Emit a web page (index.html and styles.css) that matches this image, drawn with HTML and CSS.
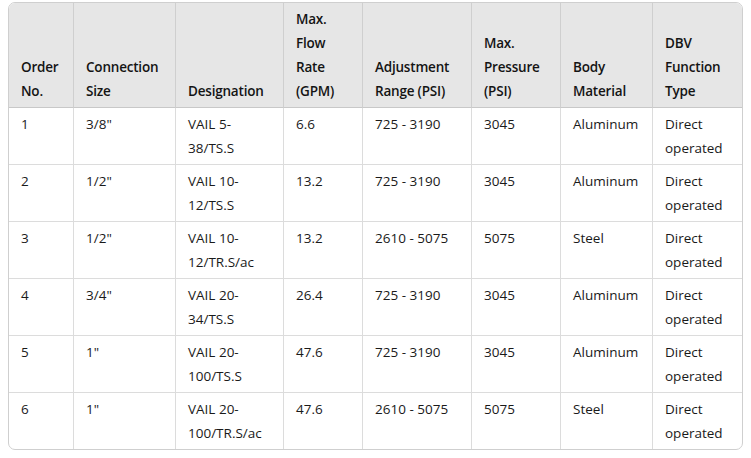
FILE: index.html
```html
<!DOCTYPE html>
<html lang="en">
<head>
<meta charset="utf-8">
<title>VAIL valves</title>
<link rel="stylesheet" href="styles.css">
</head>
<body>
<div class="table-wrap">
<table class="spec">
<colgroup>
<col class="c1"><col class="c2"><col class="c3"><col class="c4"><col class="c5"><col class="c6"><col class="c7"><col class="c8">
</colgroup>
<thead>
<tr>
<th>Order No.</th>
<th>Connection Size</th>
<th>Designation</th>
<th>Max. Flow Rate (GPM)</th>
<th>Adjustment Range (PSI)</th>
<th>Max. Pressure (PSI)</th>
<th>Body Material</th>
<th>DBV Function Type</th>
</tr>
</thead>
<tbody>
<tr><td>1</td><td>3/8"</td><td>VAIL 5-<br>38/TS.S</td><td>6.6</td><td>725 - 3190</td><td>3045</td><td>Aluminum</td><td>Direct operated</td></tr>
<tr><td>2</td><td>1/2"</td><td>VAIL 10-<br>12/TS.S</td><td>13.2</td><td>725 - 3190</td><td>3045</td><td>Aluminum</td><td>Direct operated</td></tr>
<tr><td>3</td><td>1/2"</td><td>VAIL 10-<br>12/TR.S/ac</td><td>13.2</td><td>2610 - 5075</td><td>5075</td><td>Steel</td><td>Direct operated</td></tr>
<tr><td>4</td><td>3/4"</td><td>VAIL 20-<br>34/TS.S</td><td>26.4</td><td>725 - 3190</td><td>3045</td><td>Aluminum</td><td>Direct operated</td></tr>
<tr><td>5</td><td>1"</td><td>VAIL 20-<br>100/TS.S</td><td>47.6</td><td>725 - 3190</td><td>3045</td><td>Aluminum</td><td>Direct operated</td></tr>
<tr><td>6</td><td>1"</td><td>VAIL 20-<br>100/TR.S/ac</td><td>47.6</td><td>2610 - 5075</td><td>5075</td><td>Steel</td><td>Direct operated</td></tr>
</tbody>
</table>
</div>
</body>
</html>
```
FILE: styles.css
```css
html, body {
  background: #ffffff;
}
body {
  margin: 2px 8px 8px 8px;
  font-family: "Open Sans", "Noto Sans", "Liberation Sans", sans-serif;
  font-size: 13.5px;
  color: #1a1a1a;
}
.table-wrap {
  border: 1px solid #cfcfcf;
  border-radius: 7px;
  overflow: hidden;
}
.spec {
  width: 100%;
  table-layout: fixed;
  border-collapse: separate;
  border-spacing: 0;
}
.c1 { width: 65px; }
.c2 { width: 102px; }
.c3 { width: 108px; }
.c4 { width: 79px; }
.c5 { width: 109px; }
.c6 { width: 89px; }
.c7 { width: 92px; }
.spec th,
.spec td {
  box-sizing: border-box;
  padding: 4px 12px;
  line-height: 24px;
  text-align: left;
  border-right: 1px solid #dcdcdc;
  border-bottom: 1px solid #dcdcdc;
}
.spec th {
  background: #e6e6e6;
  font-weight: 600;
  letter-spacing: -0.2px;
  vertical-align: bottom;
  color: #141414;
  border-right-color: #cfcfcf;
  border-bottom-color: #c8c8c8;
}
.spec td {
  vertical-align: top;
}
.spec th:last-child,
.spec td:last-child {
  border-right: none;
}
.spec tbody tr:last-child td {
  border-bottom: none;
}
```
